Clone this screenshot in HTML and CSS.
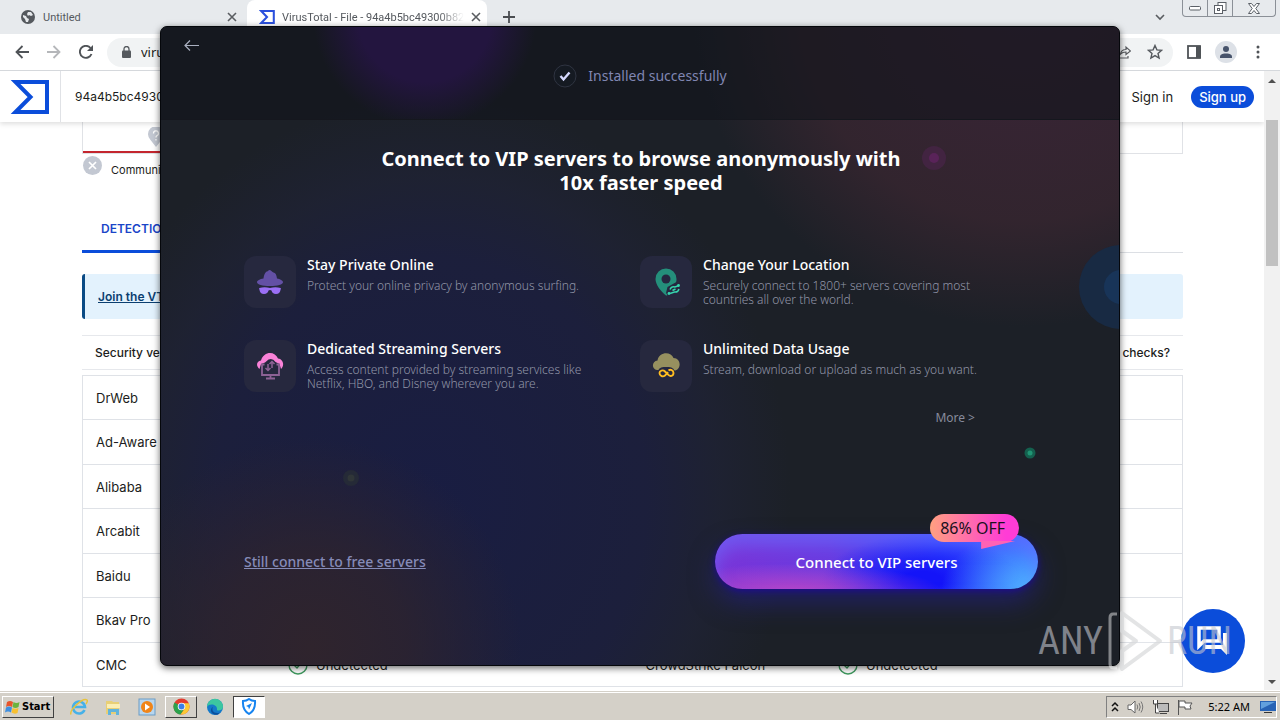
FILE: index.html
```html
<!DOCTYPE html>
<html lang="en">
<head>
<meta charset="utf-8">
<title>VirusTotal - File</title>
<link rel="stylesheet" href="styles.css">
</head>
<body>
<div class="browser">
  <div class="tabstrip">
    <div class="tab">
      <svg width="14" height="14" viewBox="0 0 14 14"><circle cx="7" cy="7" r="7" fill="#55595e"/><path d="M2 5l3 1 1 2 2 1-1 3-2 0-1-3-2-2zM7 2l3 0 2 3-2 1-2-1-1 1-1-2z" fill="#e7eaed"/></svg>
      <span class="tab-title">Untitled</span>
      <button class="bare" aria-label="Close tab"><svg width="10" height="10" viewBox="0 0 10 10"><path d="M1 1l8 8M9 1l-8 8" stroke="#5a5d61" stroke-width="1.6"/></svg></button>
    </div>
    <div class="tab tab-active">
      <svg width="16" height="14" viewBox="0 0 38 34"><path d="M5 2.500H35.500V31.500H5L19 17z" fill="none" stroke="#2b50dd" stroke-width="5"/></svg>
      <span class="tab-title fade">VirusTotal - File - 94a4b5bc49300b82</span>
      <button class="bare" aria-label="Close tab"><svg width="10" height="10" viewBox="0 0 10 10"><path d="M1 1l8 8M9 1l-8 8" stroke="#5a5d61" stroke-width="1.600"/></svg></button>
    </div>
    <button class="bare new-tab" aria-label="New tab"><svg width="12" height="12" viewBox="0 0 12 12"><path d="M6 0v12M0 6h12" stroke="#4a4d51" stroke-width="1.800"/></svg></button>
    <button class="bare tab-search" aria-label="Search tabs"><svg width="10" height="7" viewBox="0 0 10 7"><path d="M1 1l4 4 4-4" fill="none" stroke="#5a5d61" stroke-width="1.600"/></svg></button>
    <div class="winctl">
      <button aria-label="Minimize"><svg width="13" height="5" viewBox="0 0 13 5"><rect x=".5" y=".5" width="11" height="3.500" rx="1" fill="#fff" stroke="#5b6067"/></svg></button>
      <button aria-label="Restore"><svg width="13" height="13" viewBox="0 0 13 13"><rect x="4" y=".5" width="8" height="8" fill="#fff" stroke="#5b6067"/><rect x=".5" y="3.500" width="8" height="8" fill="#fff" stroke="#5b6067"/><rect x="3.500" y="6.500" width="2" height="2" fill="none" stroke="#5b6067"/></svg></button>
      <button aria-label="Close"><svg width="12" height="11" viewBox="0 0 12 11"><path d="M.5.5h3L6 3.500 8.500.5h3L7.800 5.500l3.700 5h-3L6 7.500l-2.500 3h-3l3.700-5z" fill="#fff" stroke="#5b6067"/></svg></button>
    </div>
  </div>

  <div class="toolbar">
    <button class="bare" aria-label="Back"><svg width="14" height="14" viewBox="0 0 14 14"><path d="M14 7H1.500M7.500 1L1.500 7l6 6" fill="none" stroke="#4f5357" stroke-width="1.800"/></svg></button>
    <button class="bare" aria-label="Forward"><svg width="14" height="14" viewBox="0 0 14 14"><path d="M0 7h12.500M6.500 1l6 6-6 6" fill="none" stroke="#b5b7ba" stroke-width="1.800"/></svg></button>
    <button class="bare" aria-label="Reload"><svg width="14" height="14" viewBox="0 0 14 14"><path d="M12.500 9A6 6 0 1 1 11.500 3" fill="none" stroke="#4f5357" stroke-width="1.900"/><path d="M14 0v6H8z" fill="#4f5357"/></svg></button>
    <div class="omnibox">
      <svg width="9" height="12" viewBox="0 0 9 12"><rect y="4.500" width="9" height="7.500" rx="1" fill="#55595e"/><path d="M2 5V3a2.500 2.500 0 0 1 5 0v2" fill="none" stroke="#55595e" stroke-width="1.300"/></svg>
      <input class="address" aria-label="Address" value="virustotal.com">
      <button class="bare" aria-label="Share"><svg width="14" height="14" viewBox="0 0 14 14"><path d="M1 4v9h10v-2M3.500 9C4 6 6 4.500 9 4.500V2l4.500 4L9 9.500V7C7 7 5 7.500 3.500 9z" fill="none" stroke="#5a5d61" stroke-width="1.200"/></svg></button>
      <button class="bare" aria-label="Bookmark"><svg width="16" height="16" viewBox="0 0 16 16"><path d="M8 1.500l1.900 4.400 4.700.4-3.600 3.100 1.100 4.700L8 11.600l-4.100 2.500L5 9.400 1.400 6.300l4.700-.4z" fill="none" stroke="#55595e" stroke-width="1.400"/></svg></button>
    </div>
    <button class="bare" aria-label="Side panel"><svg width="14" height="14" viewBox="0 0 14 14"><rect x="1" y="1" width="12" height="12" fill="none" stroke="#4f5357" stroke-width="1.800"/><rect x="9" y="1" width="5" height="12" fill="#4f5357"/></svg></button>
    <button class="bare profile" aria-label="Profile"><svg width="22" height="22" viewBox="0 0 22 22"><circle cx="11" cy="11" r="11" fill="#dde1e7"/><circle cx="11" cy="8" r="3" fill="#47536b"/><path d="M5 17v-1.500C5 13 9 12.500 11 12.500s6 .5 6 3V17z" fill="#47536b"/></svg></button>
    <button class="bare" aria-label="Menu"><svg width="4" height="14" viewBox="0 0 4 14"><g fill="#4f5357"><circle cx="2" cy="2" r="1.500"/><circle cx="2" cy="7" r="1.500"/><circle cx="2" cy="12" r="1.500"/></g></svg></button>
  </div>

  <div class="viewport">
    <div class="page">
      <header class="vt-header">
        <a class="vt-logo" href="#" aria-label="VirusTotal"><svg width="39" height="34" viewBox="0 0 39 34"><path d="M5.500 2H37v30H5.500L20.500 17z" fill="none" stroke="#0b4dda" stroke-width="4"/></svg></a>
        <input class="vt-search" aria-label="Search" value="94a4b5bc49300b8253">
        <a class="sign-in" href="#">Sign in</a>
        <a class="sign-up" href="#">Sign up</a>
      </header>
      <main class="report">
        <div class="summary">
          <div class="score"><svg width="16" height="21" viewBox="0 0 16 21"><path d="M8 20L2.500 13A8 8 0 1 1 13.500 13z" fill="#c3c8d2"/><path d="M5.500 6.500a2.500 2.500 0 1 1 3.500 2.200q-1 .5-1 1.800M8 12v1.500" fill="none" stroke="#fff" stroke-width="1.300"/></svg></div>
        </div>
        <div class="community">
          <svg width="19" height="19" viewBox="0 0 19 19"><circle cx="9.500" cy="9.500" r="9.500" fill="#c3c8d2"/><path d="M6 6l7 7M13 6l-7 7" stroke="#fff" stroke-width="1.700"/></svg>
          <span>Community</span>
        </div>
        <nav class="tabs"><a href="#">DETECTION</a></nav>
        <div class="banner"><a href="#">Join the VT Community</a></div>
        <div class="vendors-head"><span>Security vendors' analysis</span><span>Do you want to automate checks?</span></div>
        <table class="vendors">
          <tr><td>DrWeb</td><td></td><td></td><td></td></tr>
          <tr><td>Ad-Aware</td><td></td><td></td><td></td></tr>
          <tr><td>Alibaba</td><td></td><td></td><td></td></tr>
          <tr><td>Arcabit</td><td></td><td></td><td></td></tr>
          <tr><td>Baidu</td><td></td><td></td><td></td></tr>
          <tr><td>Bkav Pro</td><td></td><td></td><td></td></tr>
          <tr><td>CMC</td>
            <td><span class="verdict"><svg width="20" height="20" viewBox="0 0 20 20"><circle cx="10" cy="10" r="9" fill="none" stroke="#3f9a5f" stroke-width="1.400"/><path d="M6 10l3 3 5-6" fill="none" stroke="#3f9a5f" stroke-width="1.400"/></svg>Undetected</span></td>
            <td>CrowdStrike Falcon</td>
            <td><span class="verdict"><svg width="20" height="20" viewBox="0 0 20 20"><circle cx="10" cy="10" r="9" fill="none" stroke="#3f9a5f" stroke-width="1.400"/><path d="M6 10l3 3 5-6" fill="none" stroke="#3f9a5f" stroke-width="1.400"/></svg>Undetected</span></td></tr>
        </table>
      </main>
      <button class="chat" aria-label="Chat"><svg width="32" height="30" viewBox="0 0 32 30"><path d="M2 2h20v13H7l-5 5z" fill="none" stroke="#fff" stroke-width="3.500"/><path d="M26 7h4v22l-6-6H8v-4h18z" fill="#fff"/></svg></button>
    </div>
    <div class="scrollbar">
      <svg width="8" height="5" viewBox="0 0 8 5"><path d="M0 5l4-4 4 4z" fill="#505050"/></svg>
      <div class="thumb"></div>
      <svg width="8" height="5" viewBox="0 0 8 5"><path d="M0 0l4 4 4-4z" fill="#505050"/></svg>
    </div>
  </div>
</div>

<section class="installer">
  <svg class="orb orb-pink" width="24" height="24" viewBox="0 0 24 24"><circle cx="12" cy="12" r="12" fill="#422441"/><circle cx="12" cy="12" r="5" fill="#592359"/></svg>
  <svg class="orb orb-blue" width="40" height="84" viewBox="0 0 40 84"><circle cx="42" cy="42" r="42" fill="#182a43"/><circle cx="42" cy="42" r="17" fill="#183458"/></svg>
  <svg class="orb orb-green" width="12" height="12" viewBox="0 0 12 12"><circle cx="6" cy="6" r="5.500" fill="#14604e"/><circle cx="6" cy="6" r="2.500" fill="#209574"/></svg>
  <svg class="orb orb-grey" width="16" height="16" viewBox="0 0 16 16"><circle cx="8" cy="8" r="8" fill="#252a37"/><circle cx="8" cy="8" r="3.500" fill="#303638"/></svg>
  <header class="inst-header">
    <button class="bare back" aria-label="Back"><svg width="15" height="11" viewBox="0 0 15 11"><path d="M15 5.500H1M6 .5l-5 5 5 5" fill="none" stroke="#aab0c0" stroke-width="1.200"/></svg></button>
    <div class="status">
      <svg width="24" height="24" viewBox="0 0 24 24"><circle cx="12" cy="12" r="11" fill="#151a22" stroke="#303542"/><path d="M7.500 12l3 3.500L16.500 8.500" fill="none" stroke="#d6d9ff" stroke-width="2.400"/></svg>
      <span>Installed successfully</span>
    </div>
  </header>
  <div class="inst-body">
    <h1>Connect to VIP servers to browse anonymously with 10x faster speed</h1>
    <div class="features">
      <article class="feature">
        <div class="tile"><svg width="28" height="28" viewBox="0 0 28 28"><path d="M7.500 10.500C8 6 10 3.500 11 3.500c1 0 1.300-1.500 2.800-1.500S16.200 4.500 17.500 4.500c1.800 0 3 2 3.500 6 3 .6 6 2 6 3.700 0 2.300-5.500 3.800-13 3.800S1 16.500 1 14.200c0-1.700 3-3.100 6.500-3.700z" fill="#6350a5"/><path d="M3.500 20q5-1.500 10.500 0 5.500-1.500 10.500 0 .8.500.2 1.200c-.7 3.300-2 4.800-4.700 4.800-2.800 0-3.900-1.500-4.500-3.500q-1.500-.8-3 0c-.6 2-1.700 3.500-4.500 3.500-2.700 0-4-1.500-4.700-4.800q-.6-.7.200-1.200z" fill="#9a6ff5"/></svg></div>
        <div class="copy"><h2>Stay Private Online</h2><p>Protect your online privacy by anonymous surfing.</p></div>
      </article>
      <article class="feature">
        <div class="tile"><svg width="28" height="28" viewBox="0 0 28 28"><path d="M14 27.500C8.500 23 3.500 16.500 3.500 11a10.500 10.500 0 0 1 21 0c0 2-.5 4-1.500 5.500l-8 11z" fill="#248f7b"/><circle cx="14" cy="11" r="4.500" fill="#252740"/><path d="M14 25l1.500-6 9-5 4 6-5 7-7 1z" fill="#252740"/><path d="M18 21.500q1.500-3.500 5-2.500l4-1.500M27 21q-1 3.500-4.500 3L18 25.500M20.500 22.500l3-1.500" fill="none" stroke="#36d5ad" stroke-width="1.500"/><circle cx="26.500" cy="17.500" r="1.400" fill="#36d5ad"/><circle cx="17" cy="25.500" r="1.400" fill="#36d5ad"/></svg></div>
        <div class="copy"><h2>Change Your Location</h2><p>Securely connect to 1800+ servers covering most countries all over the world.</p></div>
      </article>
      <article class="feature">
        <div class="tile"><svg width="28" height="28" viewBox="0 0 28 28"><path d="M3.500 17C0 14 0 9.500 5 8.500 7.500-1 19-1.500 22 6.500c5 .5 7 6.500 3 10.500l-1.500-5-4-2q-3-4.500-7-2.500L9 10.500l-4 1.500z" fill="#f982d8"/><path d="M8.500 12.500H6v10.500h17V12.500h-2.500M14.500 23v3.500M10 26.500h9" fill="none" stroke="#8d6295" stroke-width="1.800"/><path d="M12 12v6.500M9.500 16l2.500 2.500 2.500-2.500M16 16V9.500M13.500 12L16 9.500l2.500 2.500" fill="none" stroke="#8d6295" stroke-width="1.500"/></svg></div>
        <div class="copy"><h2>Dedicated Streaming Servers</h2><p>Access content provided by streaming services like Netflix, HBO, and Disney wherever you are.</p></div>
      </article>
      <article class="feature">
        <div class="tile"><svg width="28" height="28" viewBox="0 0 28 28"><path d="M5 18C-1 17 0 9 5.500 8.500 7-.5 19-1 21.500 6c7 0 8.500 10 2 12.500z" fill="#96905f"/><rect x="5.500" y="15" width="17.500" height="12" rx="6" fill="#252740"/><path d="M16.500 18.500c2-1.500 5-.5 5 2.500s-3.500 4-5.500 1.500l-3-3c-2-2-5.500-1-5.500 1.500s3 4.500 5.500 2.500L16 20" fill="none" stroke="#ffbd20" stroke-width="1.900"/></svg></div>
        <div class="copy"><h2>Unlimited Data Usage</h2><p>Stream, download or upload as much as you want.</p></div>
      </article>
    </div>
    <button class="bare more">More &gt;</button>
    <div class="actions">
      <a class="free" href="#">Still connect to free servers</a>
      <button class="cta">Connect to VIP servers
        <span class="badge">86% OFF</span></button>
    </div>
  </div>
</section>

<div class="watermark"><span>ANY</span>
  <svg width="56" height="64" viewBox="0 0 56 64"><path d="M10 5H6Q3 5 3 9v46q0 4 4 4h3" fill="none" stroke="#fff" stroke-opacity=".45" stroke-width="3"/><path d="M15 4l38 28-38 28V42l14-10-14-10z" fill="#fff" fill-opacity=".12" stroke="#d7d8da" stroke-opacity=".7" stroke-width="4" stroke-linejoin="round"/></svg>
<span>RUN</span></div>

<footer class="taskbar">
  <button class="start"><svg width="15" height="14" viewBox="0 0 15 14"><path d="M2 2q3-2 6 0L7 7Q4 5 1 7z" fill="#e8552b"/><path d="M8.500 2q3 2 6 0l-1 5q-3 2-6 0z" fill="#6cb33e"/><path d="M1 7.500q3-2 6 0l-1 5q-3-2-6 0z" fill="#3f8fe0"/><path d="M7.500 8q3 1.500 6 0l-1 5q-3 1.500-6-.5z" fill="#f8c030"/></svg>Start</button>
  <div class="quick">
    <button class="task" aria-label="Internet Explorer"><svg width="18" height="18" viewBox="0 0 18 18"><path d="M14.500 12A6 6 0 1 1 15 9H5" fill="none" stroke="#46b1e8" stroke-width="2.600"/><path d="M1 16.500C-1 12 13-1 17 2q1 1-1 4" fill="none" stroke="#e8c33a" stroke-width="1.500"/></svg></button>
    <button class="task" aria-label="Explorer"><svg width="18" height="18" viewBox="0 0 18 18"><path d="M2 3h6l1 1h6v12H2z" fill="#e8cf76"/><path d="M3 6h13v4H3z" fill="#fbeeb4"/><path d="M4 17v-6h11v6h-3v-3H7v3z" fill="#62b4dc"/></svg></button>
    <button class="task" aria-label="Media Player"><svg width="18" height="18" viewBox="0 0 18 18"><rect x="1" y="1" width="16" height="16" fill="#b8d6ee" stroke="#6a9cc5"/><circle cx="9" cy="9" r="6" fill="#f08519"/><path d="M7 5.500l5 3.500-5 3.500z" fill="#fff"/></svg></button>
    <button class="task raised" aria-label="Chrome"><svg width="17" height="17" viewBox="0 0 18 18"><circle cx="9" cy="9" r="8.500" fill="#e33b2e"/><path d="M9 9L1.600 4.700A8.500 8.500 0 0 0 8 17.500L12.500 11z" fill="#2ba24c"/><path d="M9 5.500h7.700A8.500 8.500 0 0 1 8 17.500L12.500 11z" fill="#fcc934"/><circle cx="9" cy="9" r="4" fill="#fff"/><circle cx="9" cy="9" r="3.100" fill="#3a7ee8"/></svg></button>
    <button class="task" aria-label="Edge"><svg width="18" height="18" viewBox="0 0 18 18"><circle cx="9" cy="9" r="8" fill="#1479c9"/><path d="M1 9a8 8 0 0 1 16-.5c0 3-2.500 4-5 4q-1.500 0-1-1.500C11 6 3 5 1 9z" fill="#3cc6a0"/><path d="M7 9c-2 3 1 7.500 7 5.500l-2 2C5 18 3 11 7 9z" fill="#0b4f9c"/></svg></button>
    <button class="task pressed" aria-label="VPN"><svg width="16" height="17" viewBox="0 0 16 17"><path d="M2 3q3.500 0 6-2 2.500 2 6 2c.5 6-1 10-6 13C3 13 1.500 9 2 3z" fill="none" stroke="#1684f0" stroke-width="2"/><path d="M5 8l6-3-3 6.500-.7-2.600z" fill="#1684f0"/></svg></button>
  </div>
  <div class="tray">
    <svg width="8" height="11" viewBox="0 0 8 11"><path d="M1 5l3-3 3 3M1 10l3-3 3 3" fill="none" stroke="#111" stroke-width="1.500"/></svg>
    <svg width="17" height="14" viewBox="0 0 17 14"><path d="M1 5h3l4-4v12L4 9.500H1z" fill="#fff" stroke="#666"/><path d="M10 4.500q1.500 2.500 0 5M12 3q2.500 4 0 8M14 1.500q3.500 5.500 0 11" fill="none" stroke="#777"/></svg>
    <svg width="17" height="16" viewBox="0 0 17 16"><rect x="5.500" y="4.500" width="11" height="8" fill="#bbb" stroke="#444"/><path d="M8 14.500h7M1.500 1v4h4V1M3.500 5v9h4" fill="#fff" stroke="#444"/></svg>
    <svg width="17" height="16" viewBox="0 0 17 16"><path d="M1.500 1v15M2 2h6v2h7l-2 3 1 3H8V8H2z" fill="#fff" stroke="#555"/></svg>
    <span class="clock">5:22 AM</span>
    <svg width="16" height="14" viewBox="0 0 16 14"><path d="M0 1h16v10H0z" fill="#2863b5"/><path d="M1 2h14L1 9z" fill="#62a0de"/><path d="M4 12.500h8" stroke="#333"/></svg>
  </div>
</footer>
</body>
</html>
```

FILE: styles.css
```css
* { box-sizing: border-box; }
body {
  margin: 0;
  height: 100vh;
  display: flex;
  flex-direction: column;
  overflow: hidden;
  position: relative;
  background: #fff;
  color: #1c1d20;
  font-family: "Noto Sans", "Open Sans", sans-serif;
}
button, input { font: inherit; color: inherit; }
svg { display: block; flex: none; }
.bare { border: 0; padding: 0; background: none; }

.browser { flex: 1; min-height: 0; display: flex; flex-direction: column; }

.tabstrip { display: flex; align-items: stretch; height: 34px; background: #e7eaed; font-family: Roboto, sans-serif; font-size: 11px; color: #55595e; }
.tab { width: 247px; display: flex; align-items: center; gap: 8px; padding: 0 10px 0 21px; }
.tab-active { width: 240px; padding-left: 12px; gap: 7px; background: #fff; border-radius: 8px 8px 0 0; }
.tab-title { flex: 1; white-space: nowrap; }
.fade { -webkit-mask-image: linear-gradient(90deg, #000 86%, transparent); mask-image: linear-gradient(90deg, #000 86%, transparent); }
.new-tab { margin-left: 16px; }
.tab-search { margin-left: auto; margin-right: 17px; }
.winctl { display: flex; align-self: flex-start; height: 17px; margin-right: 4px; border: 1px solid #8b9097; border-top: 0; border-radius: 0 0 4px 4px; }
.winctl button { display: flex; align-items: center; justify-content: center; width: 25px; padding: 0; border: 0; background: none; border-right: 1px solid #8b9097; }
.winctl button:last-child { width: 42px; border-right: 0; }

.toolbar { display: flex; align-items: center; gap: 18px; height: 37px; padding: 0 20px 0 15px; border-bottom: 1px solid #d5d8dc; }
.omnibox { flex: 1; display: flex; align-items: center; gap: 10px; height: 29px; margin-left: -4px; margin-right: -4px; padding: 0 10px 0 15px; border-radius: 15px; background: #f1f3f4; }
.address { flex: 1; min-width: 0; padding: 0; border: 0; background: none; font-size: 13px; }
.omnibox button { margin-left: 6px; }
.profile { margin: 0 1px 0 -4px; }

.viewport { flex: 1; min-height: 0; display: flex; }
.page { flex: 1; min-width: 0; position: relative; overflow: hidden; font-family: Inter, Roboto, sans-serif; font-size: 12px; }
.page a { color: inherit; text-decoration: none; }
.vt-header { position: relative; display: flex; align-items: center; height: 51px; padding-right: 10px; box-shadow: 0 2px 5px #0002; }
.page .vt-logo { display: flex; align-items: center; align-self: stretch; padding: 0 11px 0 10px; border-right: 1px solid #e0e2e6; }
.vt-search { flex: 1; min-width: 0; padding: 0 14px; border: 0; }
.sign-in, .sign-up { font-size: 13px; }
.page .sign-up { margin-left: 18px; padding: 0 8px; line-height: 22px; border-radius: 11px; background: #0b4dda; color: #fff; font-weight: 500; }

.report { padding: 0 81px 0 82px; }
.summary { display: flex; height: 32px; border: 1px solid #e0e2e6; border-top: 0; }
.score { width: 160px; padding: 5px 0 0 65px; border-bottom: 2px solid #c4262e; }
.community { display: flex; align-items: flex-start; gap: 9px; height: 32px; padding: 2px 1px 0; font-size: 11px; }
.community span { padding-top: 7px; }
.tabs { margin-top: 22px; height: 45px; border-bottom: 1px solid #dcdfe4; }
.page .tabs a { display: inline-block; padding: 0 19px; line-height: 42px; border-bottom: 3px solid #0b4dda; color: #1a45c8; font-weight: 600; }
.banner { margin-top: 21px; padding: 0 13px; line-height: 45px; border-left: 3px solid #0b4b85; border-radius: 3px; background: #e3f2fd; }
.page .banner a { color: #0b3f70; font-weight: 600; text-decoration: underline; }
.vendors-head { display: flex; justify-content: space-between; margin: 16px 0 5px; padding: 0 13px; line-height: 33px; border: solid #e6e8ec; border-width: 1px 0; font-weight: 500; }
.vendors { width: 100%; border-collapse: collapse; table-layout: fixed; border: 1px solid #dfe2e7; font-size: 13px; }
.vendors tr { height: 44px; border-bottom: 1px solid #dfe2e7; }
.vendors tr:nth-child(even) { height: 45px; }
.vendors td { padding: 0 13px; }
.vendors td:nth-child(1) { width: 17.5%; }
.vendors td:nth-child(2) { width: 32.5%; }
.vendors td:nth-child(3) { width: 17.5%; }
.verdict { display: flex; align-items: center; gap: 8px; }
.chat { position: absolute; right: 19px; bottom: 17px; width: 64px; height: 64px; padding: 0; border: 0; border-radius: 50%; background: #0b4dda; display: flex; align-items: center; justify-content: center; }
.scrollbar { width: 16px; display: flex; flex-direction: column; align-items: center; padding: 7px 0 5px; background: #f1f1f1; }
.thumb { width: 12px; height: 146px; margin: 37px 0 auto; background: #c1c1c1; }

.installer {
  position: absolute;
  top: 26px;
  bottom: 54px;
  left: 12.5%;
  right: 12.5%;
  display: flex;
  flex-direction: column;
  overflow: hidden;
  border: 1px solid #05070b;
  border-radius: 7px;
  box-shadow: 0 2px 7px #0009;
  background:
    radial-gradient(circle 210px at 150px 620px, #2f242d 0, #2f242dc0 45%, #2f242d00),
    radial-gradient(circle 330px at 860px -30px, #3a2438 0, #35252fe0 68%, #35252f00),
    radial-gradient(ellipse 360px 400px at 270px 470px, #191d42 0, #1c1f3df0 60%, #20233a90 80%, #1c202700),
    #1c2027;
  color: #fff;
}
.orb { position: absolute; }
.orb-pink { top: 119px; right: 173px; }
.orb-blue { top: 218px; right: 0; }
.orb-green { top: 420px; right: 83px; }
.orb-grey { top: 443px; left: 182px; }
.inst-header { height: 93px; position: relative; background: radial-gradient(circle 112px at 264px -12px, #23153f 60%, #23153f00), #10141b99; border-bottom: 1px solid #15171e; }
.back { display: block; margin: 13px 0 0 23px; }
.status { display: flex; align-items: center; justify-content: center; gap: 11px; margin-top: 13px; font-size: 14px; line-height: 24px; color: #8086b2; }
.inst-body { flex: 1; display: flex; flex-direction: column; padding: 27px 81px 76px 83px; }
h1 { max-width: 540px; margin: 0 auto 61px; font-size: 20px; line-height: 24px; font-weight: 700; text-align: center; }
.features { display: grid; grid-template-columns: 1fr 1fr; row-gap: 32px; margin-right: 2px; }
.feature { display: flex; gap: 11px; height: 52px; }
.tile { flex: none; display: flex; align-items: center; justify-content: center; width: 52px; height: 52px; border-radius: 12px; background: #26283e; }
.copy { max-width: 294px; }
h2 { margin: 0 0 5px; font-size: 14px; line-height: 18px; font-weight: 500; }
p { margin: 0; font-size: 12px; line-height: 14px; font-weight: 300; color: #9296a8; }
.more { align-self: flex-end; margin: 17px 63px 0 0; font-size: 12px; line-height: 18px; color: #878b9c; }
.actions { display: flex; align-items: center; justify-content: space-between; margin-top: auto; }
.free { font-size: 14px; font-weight: 500; color: #858bb8; }
.cta {
  position: relative;
  width: 323px;
  height: 55px;
  padding: 0;
  border: 0;
  border-radius: 28px;
  font-size: 15px;
  font-weight: 500;
  color: #fff;
  background:
    radial-gradient(ellipse 150px 28px at 24% 105%, #b845c8, #b845c800),
    radial-gradient(ellipse 90px 60px at 98% 100%, #4fb4ff, #4fb4ff00),
    radial-gradient(ellipse 100px 46px at 64% 85%, #1414f8 20%, #1414f800),
    linear-gradient(90deg, #7a35d8, #6a3be0 35%, #3048ff 70%, #3a64ff);
  box-shadow: 0 2px 6px #1d0c8c, 0 14px 26px #2420a080, inset 0 12px 16px #6a70ff90;
}
.badge { position: absolute; right: 19px; top: -20px; padding: 0 14px 0 10px; line-height: 28px; border-radius: 14px; background: linear-gradient(90deg, #ffa080, #ff3cd6 85%); color: #1a1020; font-size: 16px; font-weight: 400; }
.badge::after { content: ""; position: absolute; left: 51px; top: 27px; width: 34px; height: 8px; background: #ff62b5; clip-path: polygon(0 0, 100% 0, 0 100%); }

.watermark { position: absolute; right: 48px; bottom: 47px; display: flex; align-items: center; gap: 4px; font-family: "Roboto Condensed", Roboto, sans-serif; font-size: 38px; line-height: 64px; color: #c3c6ce99; pointer-events: none; }

.taskbar { height: 28px; margin-top: 2px; display: flex; align-items: center; padding: 0 3px 0 2px; background: #d4d0c8; border-top: 1px solid #fff; outline: 1px solid #d4d0c8; }
.start { display: flex; align-items: center; gap: 2px; height: 22px; padding: 0 3px 0 2px; border: 1px solid; border-color: #fff #404040 #404040 #fff; background: #d4d0c8; color: #000; font: 700 11px "DejaVu Sans Condensed", "DejaVu Sans", sans-serif; }
.quick { display: flex; gap: 2px; margin-left: 9px; }
.task { display: flex; align-items: center; justify-content: center; width: 32px; height: 22px; padding: 0; border: 1px solid transparent; background: none; }
.raised { border-color: #fff #404040 #404040 #fff; }
.pressed { border-color: #404040 #fff #fff #404040; background: #fff; }
.tray { display: flex; align-items: center; gap: 8px; height: 22px; margin-left: auto; padding-left: 4px; border: 1px solid; border-color: #808080 #fff #fff #808080; }
.clock { margin: 0 2px 0 6px; font-size: 11px; color: #000; }
```
